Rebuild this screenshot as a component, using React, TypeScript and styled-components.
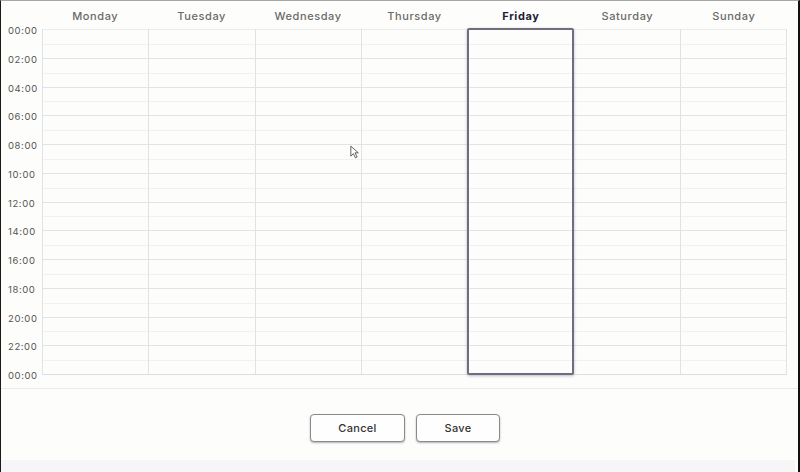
import styled, { createGlobalStyle, css } from 'styled-components';

const GlobalStyle = createGlobalStyle`
  html, body {
    margin: 0;
    padding: 0;
    background: #fdfdfb;
  }
  * {
    box-sizing: border-box;
  }
`;

const DAYS = ['Monday', 'Tuesday', 'Wednesday', 'Thursday', 'Friday', 'Saturday', 'Sunday'];
const HOURS = ['00:00', '02:00', '04:00', '06:00', '08:00', '10:00', '12:00', '14:00', '16:00', '18:00', '20:00', '22:00', '00:00'];
const SELECTED = 'Friday';
const ROW_H = 28.75;

const App = () => {
  return (
    <>
      <GlobalStyle />
      <Frame>
        <Calendar>
          <Header>
            <Gutter />
            {DAYS.map((day) => (
              <DayLabel key={day} $active={day === SELECTED}>
                {day}
              </DayLabel>
            ))}
          </Header>

          <Body>
            <TimeColumn>
              {HOURS.map((h, i) => (
                <TimeLabel key={h + i}>{h}</TimeLabel>
              ))}
            </TimeColumn>

            <Grid>
              {DAYS.map((day) => (
                <DayColumn key={day} $selected={day === SELECTED}>
                  {HOURS.slice(0, 12).map((h, i) => (
                    <Slot key={i} $first={i === 0} />
                  ))}
                </DayColumn>
              ))}
              <Cursor viewBox="0 0 12 16" width="10" height="14">
                <path d="M1 1 L1 13 L4 10 L6.5 15 L8.5 14 L6 9 L10 9 Z" fill="#fff" stroke="#444" strokeWidth="1" strokeLinejoin="round" />
              </Cursor>
            </Grid>
          </Body>
        </Calendar>

        <Footer>
          <Button>Cancel</Button>
          <Button $narrow>Save</Button>
        </Footer>

        <BottomStrip />
      </Frame>
    </>
  );
};

export default App;

const Frame = styled.div`
  width: 800px;
  height: 472px;
  display: flex;
  flex-direction: column;
  background: #fdfdfb;
  border-top: 1px solid #a8a8a8;
  border-left: 1px solid #1a1a1a;
  border-right: 2px solid #111;
  font-family: Inter, 'Noto Sans', sans-serif;
  overflow: hidden;
`;

const Calendar = styled.div`
  display: flex;
  flex-direction: column;
  padding-right: 11px;
  border-bottom: 1px solid #ebebeb;
  height: 388px;
`;

const Header = styled.div`
  display: grid;
  grid-template-columns: 41px repeat(7, 1fr);
  align-items: center;
  height: 28px;
  padding-top: 2px;
`;

const Gutter = styled.div``;

const DayLabel = styled.div<{ $active?: boolean }>`
  text-align: center;
  font-size: 11px;
  font-weight: ${({ $active }) => ($active ? 700 : 500)};
  letter-spacing: 0.6px;
  color: ${({ $active }) => ($active ? '#1d1d38' : '#6a6a6a')};
`;

const Body = styled.div`
  display: flex;
  flex-direction: row;
  align-items: flex-start;
`;

const TimeColumn = styled.div`
  width: 41px;
  height: ${ROW_H * 12 + 10}px;
  margin-top: -3px;
  padding-left: 7px;
  display: flex;
  flex-direction: column;
  justify-content: space-between;
`;

const TimeLabel = styled.div`
  height: 10px;
  line-height: 10px;
  font-size: 9.5px;
  font-weight: 400;
  letter-spacing: 0.6px;
  color: #555;
`;

const Grid = styled.div`
  flex: 1;
  position: relative;
  display: grid;
  grid-template-columns: repeat(7, 1fr);
  border-left: 1px solid #e2e2e2;
  border-bottom: 1px solid #dedede;
`;

const DayColumn = styled.div<{ $selected?: boolean }>`
  position: relative;
  display: flex;
  flex-direction: column;
  border-right: 1px solid #e2e2e2;

  ${({ $selected }) =>
    $selected &&
    css`
      &::before {
        content: '';
        position: absolute;
        top: -1px;
        left: -1px;
        right: -1px;
        bottom: -1px;
        border: 2px solid #6e6e80;
        border-radius: 2px;
        box-shadow: 0 1px 3px rgba(60, 60, 90, 0.35);
        z-index: 2;
        pointer-events: none;
      }
    `}
`;

const Slot = styled.div<{ $first?: boolean }>`
  position: relative;
  height: ${ROW_H}px;
  border-top: 1px solid ${({ $first }) => ($first ? '#ececec' : '#e3e3e3')};

  &::after {
    content: '';
    position: absolute;
    left: 0;
    right: 0;
    top: 50%;
    border-top: 1px solid #f1f1f1;
  }
`;

const Cursor = styled.svg`
  position: absolute;
  left: 307px;
  top: 116px;
  z-index: 3;
`;

const Footer = styled.div`
  display: flex;
  justify-content: center;
  gap: 11px;
  padding-top: 25px;
  padding-left: 11px;
  height: 71px;
`;

const Button = styled.button<{ $narrow?: boolean }>`
  width: ${({ $narrow }) => ($narrow ? '84px' : '95px')};
  height: 28px;
  background: #fefefe;
  border: 1px solid #8a8a8a;
  border-radius: 4px;
  box-shadow: 0 1px 2px rgba(0, 0, 0, 0.3);
  font-family: Inter, 'Noto Sans', sans-serif;
  font-size: 11px;
  font-weight: 500;
  letter-spacing: 0.3px;
  color: #333;
  cursor: pointer;
`;

const BottomStrip = styled.div`
  flex: 1;
  margin-right: 3px;
  background: #f6f6f9;
`;
